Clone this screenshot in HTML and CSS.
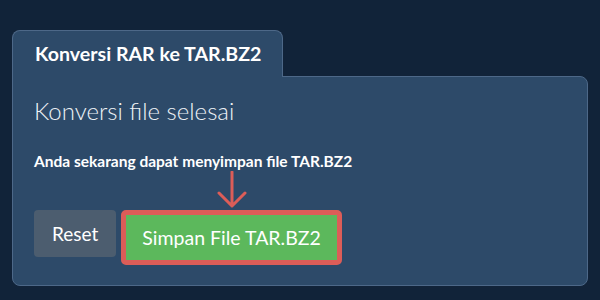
FILE: index.html
```html
<!DOCTYPE html>
<html lang="id">
<head>
    <meta charset="UTF-8">
    <meta name="viewport" content="width=device-width, initial-scale=1.0">
    <title>Konversi RAR ke TAR.BZ2</title>
    <link rel="stylesheet" href="styles.css">
</head>
<body>
    <div class="converter">
        <div class="tab">Konversi RAR ke TAR.BZ2</div>
        <div class="panel">
            <h2 class="panel-title">Konversi file selesai</h2>
            <p class="panel-text">Anda sekarang dapat menyimpan file TAR.BZ2</p>

            <div class="actions">
                <button class="btn btn-reset">Reset</button>
                <div class="save-wrap">
                    <!-- arrow pointing at the download button -->
                    <svg class="save-arrow" width="32" height="38" viewBox="0 0 32 38">
                        <path d="M16 1 V35 M3 22 L16 35 L29 22" fill="none" stroke="#dc5d58" stroke-width="3" stroke-linecap="round" stroke-linejoin="round"/>
                    </svg>
                    <button class="btn btn-save">Simpan File TAR.BZ2</button>
                </div>
            </div>
        </div>
    </div>
</body>
</html>
```

FILE: styles.css
```css
body {
    font-family: Lato, "Open Sans", Arial, sans-serif;
    background-color: #112339;
    color: #fff;
    margin: 0;
    padding: 30px 12px 0;
}

.converter {
    display: flex;
    flex-direction: column;
    align-items: flex-start;
}

.tab {
    position: relative;
    z-index: 1;
    background: #2d4a69;
    border: 1px solid #4d6888;
    border-bottom: none;
    border-radius: 8px 8px 0 0;
    padding: 11px 21px 11px 22px;
    margin-bottom: -1px;
    font-size: 19.6px;
    font-weight: bold;
    line-height: 24px;
}

.panel {
    align-self: stretch;
    background: #2d4a69;
    border: 1px solid #4d6888;
    border-radius: 0 8px 8px 8px;
    padding: 20px 20px 20px 21px;
}

.panel-title {
    margin: 0;
    font-size: 24px;
    font-weight: 300;
    line-height: 1.2;
    color: #eef2f6;
}

.panel-text {
    margin: 26px 0 0;
    font-size: 15.5px;
    font-weight: bold;
    line-height: 18px;
}

.actions {
    display: flex;
    align-items: flex-start;
    gap: 5px;
    margin-top: 40px;
}

.btn {
    font-family: inherit;
    color: #fff;
    border: none;
    cursor: pointer;
}

.btn-reset {
    background: #4c5d6f;
    border-radius: 4px;
    padding: 12px 18px;
    font-size: 19px;
    line-height: 23px;
}

.save-wrap {
    position: relative;
}

/* arrow sits above the button */
.save-arrow {
    position: absolute;
    left: 50%;
    top: -39px;
    margin-left: -16px;
}

.btn-save {
    display: block;
    background: #5cb85c;
    border: 5px solid #dc5d58;
    border-radius: 5px;
    padding: 10px 16px;
    font-size: 19.5px;
    line-height: 25px;
}
```
